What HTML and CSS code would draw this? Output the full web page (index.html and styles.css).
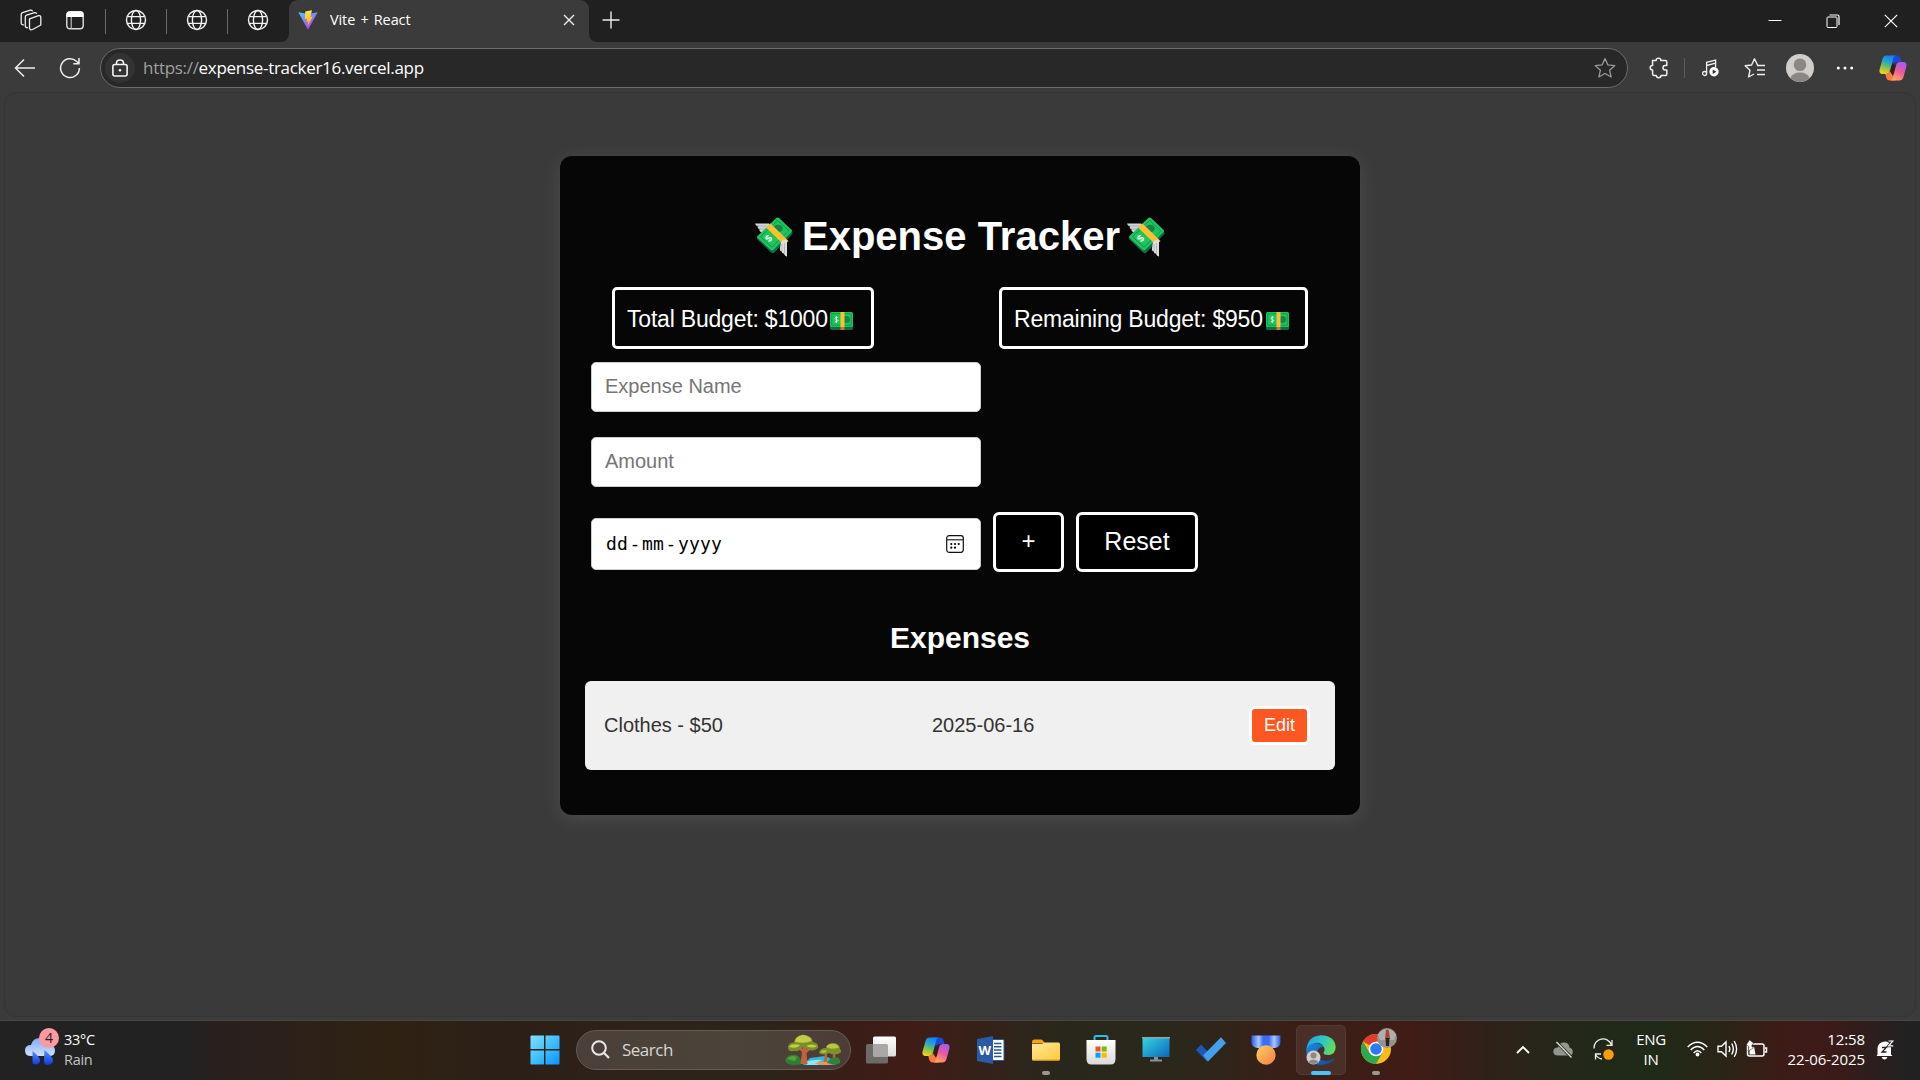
FILE: index.html
```html
<!DOCTYPE html>
<html lang="en">
<head>
<meta charset="utf-8">
<title>Vite + React</title>
<link rel="stylesheet" href="styles.css">
</head>
<body>
<svg class="defs" aria-hidden="true">
  <defs>
    <linearGradient id="vA" x1="0" y1="0" x2="0.6" y2="1"><stop offset="0" stop-color="#41d1ff"/><stop offset="1" stop-color="#bd34fe"/></linearGradient>
    <linearGradient id="vB" x1="0" y1="0" x2="0" y2="1"><stop offset="0" stop-color="#ffea83"/><stop offset=".2" stop-color="#ffdd35"/><stop offset="1" stop-color="#ffa800"/></linearGradient>
    <linearGradient id="cpA" x1="0.6" y1="0" x2="0.3" y2="1"><stop offset="0" stop-color="#1a7fe8"/><stop offset=".3" stop-color="#1f9fdc"/><stop offset=".6" stop-color="#6fc05a"/><stop offset="1" stop-color="#f8d21c"/></linearGradient>
    <linearGradient id="cpB" x1="0.7" y1="0" x2="0.3" y2="1"><stop offset="0" stop-color="#a45af0"/><stop offset=".5" stop-color="#ee5a9c"/><stop offset="1" stop-color="#ffa85a"/></linearGradient>
    <linearGradient id="win" x1="0" y1="0" x2="1" y2="1"><stop offset="0" stop-color="#84e0ff"/><stop offset=".5" stop-color="#3fc0ff"/><stop offset="1" stop-color="#0a93ff"/></linearGradient>
    <linearGradient id="cloud" x1="0" y1="0" x2="0" y2="1"><stop offset="0" stop-color="#7ea9f8"/><stop offset="1" stop-color="#d3e0fb"/></linearGradient>
    <linearGradient id="drop" x1="0" y1="0" x2="0" y2="1"><stop offset="0" stop-color="#4f97ff"/><stop offset="1" stop-color="#1238e0"/></linearGradient>
    <linearGradient id="fold" x1="0" y1="0" x2="1" y2="1"><stop offset="0" stop-color="#ffe89a"/><stop offset="1" stop-color="#ffc93a"/></linearGradient>
    <linearGradient id="scr" x1="0" y1="0" x2="1" y2="1"><stop offset="0" stop-color="#35d6e0"/><stop offset="1" stop-color="#0b66bd"/></linearGradient>
    <linearGradient id="bag" x1="0" y1="0" x2="0" y2="1"><stop offset="0" stop-color="#fff"/><stop offset="1" stop-color="#d9d9d9"/></linearGradient>
    <linearGradient id="medal" x1="0" y1="0" x2="1" y2="1"><stop offset="0" stop-color="#ffd35a"/><stop offset="1" stop-color="#f47c48"/></linearGradient>
    <linearGradient id="rib" x1="0" y1="0" x2="1" y2="0"><stop offset="0" stop-color="#2f5bf0"/><stop offset=".25" stop-color="#a9c9ff"/><stop offset=".4" stop-color="#3d6cf6"/><stop offset=".6" stop-color="#3d6cf6"/><stop offset=".78" stop-color="#a9c9ff"/><stop offset="1" stop-color="#2f5bf0"/></linearGradient>
    <linearGradient id="edA" x1="0" y1="0.3" x2="1" y2="0.6"><stop offset="0" stop-color="#1fa3e4"/><stop offset=".5" stop-color="#2fc6c9"/><stop offset="1" stop-color="#66e04e"/></linearGradient>
    <linearGradient id="edB" x1="0" y1="0" x2="1" y2="1"><stop offset="0" stop-color="#1b8be0"/><stop offset="1" stop-color="#0d4a9e"/></linearGradient>
    <linearGradient id="tv" x1="0" y1="0" x2="0" y2="1"><stop offset="0" stop-color="#fff"/><stop offset="1" stop-color="#dcdcdc"/></linearGradient>
    <symbol id="globe" viewBox="0 0 22 22"><g fill="none" stroke="#f2f2f2" stroke-width="1.4"><circle cx="11" cy="11" r="9.5"/><ellipse cx="11" cy="11" rx="4.6" ry="9.5"/><path d="M2.4 7.6H19.6M2.4 14.4H19.6"/></g></symbol>
    <symbol id="copilot" viewBox="0 0 28 26">
      <path d="M10 .5H18C20 .5 21 1.500 21.600 3.500L22.500 7H18C15.500 7 14.500 8.500 13.800 11L12 3Z" fill="#1b48d8"/>
      <path d="M8 .5H17C15 1 14.500 2.500 14 4.500L10.800 16C10.100 18.300 9 19 7 19H4C1 19 0 17 .6 14.500L3.500 4C4.300 1.500 5.500 .5 8 .5Z" fill="url(#cpA)"/>
      <path d="M7 19C9 19 10.100 18.300 10.800 16L12 12L16.500 25.500H11C8.800 25.500 7.800 24.500 7.200 22.500L6.300 19Z" fill="#ff7a3c"/>
      <path d="M10.800 16L13.800 8L17 10.500L14 21Z" fill="#2c241f"/>
      <path d="M20 25.500H11.500C13.200 25 13.700 23.500 14.200 21.500L17.200 10C17.900 7.700 19 7 21 7H24C27 7 28 9 27.400 11.500L24.500 22C23.700 24.500 22.500 25.500 20 25.500Z" fill="url(#cpB)"/>
    </symbol>
    <symbol id="wings" viewBox="0 0 38 40">
      <path d="M0 6.500H14L18 11L8 16C5 15 3.500 13 5 12.500C2.500 11.500 2 10 3.500 9.500C1.500 9 .5 8 0 6.500Z" fill="#d5d5d8"/>
      <path d="M2 9H12M4 12H11" stroke="#a6a6ac" stroke-width=".8"/>
      <path d="M3 20L22 1.500Q23 .6 24 1.600L37 14.500Q38.300 16.500 37 17.500L19.500 35.500Q17.500 37 15.500 35L2.500 22.500Q1.500 21.200 3 20Z" fill="#0d6b45"/>
      <path d="M2.500 19L21.500 .8Q22.800 0 24 1L36.500 12.800Q37.500 14 36.500 15L18.500 32.800Q17 34 15.500 32.700L2.500 21Q1.500 20 2.500 19Z" fill="#20c45e"/>
      <path d="M5.500 19.800L22.700 3.400L33.800 13.800L16.900 30.200Z" fill="none" stroke="#12974c" stroke-width="1"/>
      <ellipse cx="23" cy="11.500" rx="4.800" ry="3.800" fill="#11874a"/>
      <path d="M11 10.500L15.500 6.500L33.500 24L29 28Z" fill="#fdc02f"/>
      <text class="bill-sign" transform="translate(13.500 21) rotate(-48)" x="-3" y="3.600">$</text>
      <path d="M26 25Q30 21 32 23.500V39.500Q29.500 39 29 36.500Q27 37 26.800 34.500Q25 34.500 24.800 32Z" fill="#dedde0"/>
      <path d="M27 27V34M29.500 26V36" stroke="#a9a9ae" stroke-width=".8"/>
    </symbol>
    <symbol id="cash" viewBox="0 0 24 18">
      <rect x="0" y="1" width="23" height="17" rx="1.500" fill="#0d6b45"/>
      <rect x="0" y="0" width="23" height="15" rx="1.500" fill="#20c45e"/>
      <rect x="1.800" y="1.800" width="19.400" height="11.400" fill="none" stroke="#12974c" stroke-width=".9"/>
      <circle cx="16.500" cy="7.500" r="3.500" fill="#0f8a49"/>
      <rect x="10.500" width="4" height="15" fill="#fdc02f"/><rect x="10.500" y="15" width="4" height="3" fill="#c87b22"/>
      <path d="M7.800 5.600Q5 4.600 5.200 6.300T7.500 8.200T5 9.700M6.400 4V11" fill="none" stroke="#d9ffe6" stroke-width=".9"/>
    </symbol>
  </defs>
</svg>

<header class="tabstrip">
  <div class="strip-left">
    <svg class="i-work" width="22" height="22" viewBox="0 0 22 22"><g fill="none" stroke="#eee" stroke-width="1.300" stroke-linejoin="round"><path d="M9.500 9.800L18.500 6.700Q20.600 6.300 20.800 8.300V16L12.500 20.500Q10 21.500 9.500 19Z"/><path d="M8 18.500Q5.500 19 5.300 17V8Q5.400 6.700 6.500 6.200L14.500 3.600Q16.300 3.300 16.700 4.800"/><path d="M4 15.800Q1.300 16 1.200 14V5.500Q1.200 4.200 2.500 3.600L10.500 1.100Q12.200 .8 12.600 2.300"/></g></svg>
    <svg class="i-acts" width="18" height="19" viewBox="0 0 18 19"><rect x=".8" y=".8" width="16.400" height="17" rx="3" fill="none" stroke="#ddd" stroke-width="1.400"/><path d="M.5 6V3.500Q.5.500 3.500.500H14.500Q17.500.500 17.500 3.500V6Z" fill="#fff"/><path d="M5.200 6V18" stroke="#bbb" stroke-width="1.200"/></svg>
    <i class="sep"></i><svg class="globe"><use href="#globe"/></svg>
    <i class="sep"></i><svg class="globe"><use href="#globe"/></svg>
    <i class="sep"></i><svg class="globe"><use href="#globe"/></svg>
  </div>
  <div class="tab-wrap"><div class="tab">
    <svg width="20" height="20" viewBox="0 0 20 20"><path d="M.3 2.200L10 19.800L19.700 2.200L10.500 3.900Z" fill="url(#vA)"/><path d="M14 .2L7.300 1.500L6.800 9.300L9 8.800L8.300 12L10.200 11.400L9.600 16.500L14.700 6.500L12.300 7Z" fill="url(#vB)"/></svg>
    <span class="tab-title">Vite + React</span>
    <svg class="tab-x" width="12" height="12" viewBox="0 0 12 12"><path d="M1 1L11 11M11 1L1 11" stroke="#eee" stroke-width="1.400"/></svg>
  </div></div>
  <div class="strip-right">
    <svg width="18" height="18" viewBox="0 0 18 18"><path d="M9 .5V17.500M.5 9H17.500" stroke="#eee" stroke-width="1.400"/></svg>
    <div class="winctl">
      <svg width="14" height="14" viewBox="0 0 14 14"><path d="M.5 6.500H13.500" stroke="#fff"/></svg>
      <svg width="14" height="14" viewBox="0 0 14 14"><g fill="none" stroke="#fff"><rect x="1" y="3" width="10" height="10.500" rx="1"/><path d="M3.500 1H11.500Q13 1 13 2.500V11" stroke-width="1.200"/></g></svg>
      <svg width="14" height="14" viewBox="0 0 14 14"><path d="M.8 .8L13.200 13.200M13.200 .8L.8 13.200" stroke="#fff" stroke-width="1.200"/></svg>
    </div>
  </div>
</header>

<nav class="toolbar">
  <svg class="i-back" width="22" height="20" viewBox="0 0 22 20"><path d="M21 10H1.500M10 1.500L1.500 10L10 18.500" fill="none" stroke="#eee" stroke-width="1.500"/></svg>
  <svg class="i-reload" width="22" height="22" viewBox="0 0 22 22"><path d="M20.400 11A9.400 9.400 0 1 1 17.500 4.300L20 6.500M20 1V6.800H14.300" fill="none" stroke="#eee" stroke-width="1.500"/></svg>
  <div class="address">
    <span class="lock"><svg width="16" height="18" viewBox="0 0 16 18"><g fill="none" stroke="#f4f4f4" stroke-width="1.600"><rect x=".9" y="5.500" width="14.200" height="11.500" rx="2"/><path d="M4.500 5.500V4.200Q4.500 1 8 1T11.500 4.200V5.500"/></g><circle cx="8" cy="11.300" r="1.300" fill="#fff"/></svg></span>
    <span class="url"><span class="scheme">https://</span>expense-tracker16.vercel.app</span>
    <svg class="i-star" width="22" height="22" viewBox="0 0 22 22"><path d="M11 1.500L13.900 7.900L20.800 8.600L15.600 13.200L17.100 20L11 16.500L4.900 20L6.400 13.200L1.200 8.600L8.100 7.900Z" fill="none" stroke="#999" stroke-width="1.300" stroke-linejoin="round"/></svg>
  </div>
  <svg class="i-puzzle" width="20" height="22" viewBox="0 0 20 22"><path d="M3.500 3.500H7.200Q7 1.200 9.500 1.200T11.800 3.500H16.500Q17.800 3.500 17.800 5V8.600H16Q14 8.700 14 10.800T16 13H17.800V17Q17.800 18.500 16.500 18.500H12Q12 20.700 9.700 20.700T7.300 18.500H5Q3.700 18.500 3.600 17V13Q1.200 13 1.200 10.800T3.600 8.600Z" fill="none" stroke="#eee" stroke-width="1.500" stroke-linejoin="round"/></svg>
  <i class="tsep"></i>
  <svg class="i-music" width="17" height="18" viewBox="0 0 17 18"><g fill="none" stroke="#eee" stroke-width="1.300"><circle cx="2.600" cy="14.500" r="2"/><path d="M4.600 14.500V3.300L13.600 1V8M4.600 6.500L13.600 4.200"/></g><circle cx="12" cy="12.700" r="4.700" fill="#fff"/><path d="M10.700 10.500L14.300 12.700L10.700 14.900Z" fill="#333"/></svg>
  <svg class="i-fav" width="22" height="22" viewBox="0 0 22 22"><path d="M13.500 8L10.500 1.800L7.600 8L1.200 8.700L6 13.200L4.600 20L10 17M13 8.500H21M13 13H21M13 17.500H21" fill="none" stroke="#eee" stroke-width="1.400" stroke-linejoin="round"/></svg>
  <svg class="i-user" width="28" height="28" viewBox="0 0 28 28"><circle cx="14" cy="14" r="14" fill="#d0cdca"/><circle cx="14" cy="10.700" r="6.300" fill="#8b8784"/><path d="M4.300 24Q7 18.500 14 18.500T23.700 24A14 14 0 0 1 4.300 24Z" fill="#8b8784"/></svg>
  <svg class="i-dots" width="18" height="4" viewBox="0 0 18 4"><g fill="#fff"><circle cx="2.300" cy="2" r="1.500"/><circle cx="9" cy="2" r="1.500"/><circle cx="15.700" cy="2" r="1.500"/></g></svg>
  <svg class="i-cop"><use href="#copilot"/></svg>
</nav>

<main class="viewport">
  <section class="card">
    <h1><svg class="wings"><use href="#wings"/></svg><span>Expense Tracker</span><svg class="wings"><use href="#wings"/></svg></h1>
    <div class="budgets">
      <div class="budget total">Total Budget: $1000<svg class="cash"><use href="#cash"/></svg></div>
      <div class="budget remaining">Remaining Budget: $950<svg class="cash"><use href="#cash"/></svg></div>
    </div>
    <div class="form">
      <input class="field" type="text" placeholder="Expense Name">
      <input class="field" type="text" placeholder="Amount">
      <div class="form-row">
        <div class="date"><span class="parts"><span>dd</span><span class="dash">-</span><span>mm</span><span class="dash">-</span><span>yyyy</span></span>
          <svg width="18" height="18" viewBox="0 0 18 18"><rect x=".7" y=".7" width="16.600" height="16.600" rx="2.500" fill="none" stroke="#111" stroke-width="1.200"/><path d="M1 4.800H17" stroke="#111" stroke-width="1.100"/><g fill="#000"><circle cx="5.300" cy="9" r="1.100"/><circle cx="9" cy="9" r="1.100"/><circle cx="12.700" cy="9" r="1.100"/><circle cx="5.300" cy="12.700" r="1.100"/><circle cx="9" cy="12.700" r="1.100"/></g></svg>
        </div>
        <button class="btn add">+</button>
        <button class="btn reset">Reset</button>
      </div>
    </div>
    <h2>Expenses</h2>
    <div class="expense"><span class="what">Clothes - $50</span><span class="when">2025-06-16</span><button class="edit">Edit</button></div>
  </section>
</main>

<footer class="taskbar">
  <div class="weather">
    <div class="wicon"><svg width="32" height="28" viewBox="0 0 32 28"><path d="M7 19Q1 19 1 13.500T7 8Q9 1 15.500 1T24 7Q31 8 31 13.500T25 19Z" fill="url(#cloud)"/><path d="M8.500 14Q16 20 16 23.500T12 27.500T8.500 23Z" fill="url(#drop)"/><path d="M20.500 13Q29 20 29 23.500T24.500 27.800T20 23.500Z" fill="url(#drop)"/></svg><b>4</b></div>
    <div class="wtext"><span>33°C</span><span class="dim">Rain</span></div>
  </div>
  <div class="apps">
    <div class="app start"><svg width="30" height="30" viewBox="0 0 30 30"><path d="M1.500 .5H14V14H.5V1.500Q.5 .5 1.500 .5ZM15.500 .5H28.500Q29.500 .5 29.500 1.500V14H15.500ZM.5 15.500H14V29.500H1.500Q.5 29.500 .5 28.500ZM15.500 15.500H29.500V28.500Q29.500 29.500 28.500 29.500H15.500Z" fill="url(#win)"/></svg></div>
    <div class="search">
      <svg width="19" height="19" viewBox="0 0 19 19"><circle cx="8" cy="8" r="6.800" fill="none" stroke="#e8e8e8" stroke-width="2"/><path d="M12.800 12.800L18 18" stroke="#e8e8e8" stroke-width="2.200"/></svg>
      <span>Search</span>
      <svg class="trees" width="56" height="32" viewBox="0 0 56 32"><path d="M18 31L25 24L40 22L53 28L50 31Z" fill="#35b6d9"/><path d="M20 28Q30 25 38 26Q30 28 36 31H22Z" fill="#8fe6f2"/><path d="M30 29Q40 26 48 30L44 31H34Z" fill="#e29a62"/><path d="M0 27Q1 22 6 21Q12 19 15 24L18 30Q8 32 3 30Z" fill="#2f7d32"/><path d="M2 25Q6 20 12 23L10 27Z" fill="#56a33a"/><path d="M15.500 30L17 18L10 12L13 11L18 15L19 8L21.500 15L27 11L28.500 13L21.500 19L22.500 30Z" fill="#c2603f"/><path d="M3 15Q2 9 9 8.500Q9 3 18 .5Q28 2 28 8Q34 9 33 14Q29 18 23 15.500Q20 13 18 13Q14 18 9 17Q4 18 3 15Z" fill="#7a8f2a"/><path d="M10 8Q10 2 18 1Q26 2 26.500 7Q20 10 10 8ZM4 13Q6 9 15 11Q12 15 4 13ZM21 12Q27 9 32 12Q28 15 21 12Z" fill="#c2cc49"/><path d="M38.500 28L40 19L42 19V28ZM47.500 27L48 18H50.500L50 27Z" fill="#c2603f"/><path d="M34 19Q35 14 41 14Q42 9 49 9Q55 10 55 15Q58 18 53 20Q46 21 44 19Q38 22 34 19Z" fill="#7d9329"/><path d="M41 13Q44 9 50 10Q55 12 53 14Q46 16 41 13ZM35 18Q38 15 42 17Q40 20 35 18Z" fill="#b9c545"/><path d="M42 29Q45 23 50 23Q56 23 55 29L50 31Z" fill="#388039"/></svg>
    </div>
    <div class="app"><svg width="30" height="28" viewBox="0 0 30 28"><rect y="8" width="22" height="19.500" rx="1.500" fill="#6e6a69"/><rect x="7" y=".5" width="23" height="20" rx="1.500" fill="url(#tv)"/><path d="M7 8H20.500Q22 8 22 9.500V20.500H8.500Q7 20.500 7 19Z" fill="#aaa7a6"/></svg></div>
    <div class="app"><svg class="cop"><use href="#copilot"/></svg></div>
    <div class="app"><svg width="28" height="28" viewBox="0 0 28 28"><rect x="13" y="3.500" width="14" height="21" rx="1" fill="#fff" stroke="#2b5797"/><path d="M17 7.500H24.500M17 10.700H24.500M17 14H24.500M17 17.200H24.500M17 20.500H24.500" stroke="#2b5797" stroke-width="1.500"/><path d="M0 3L16 0V28L0 25Z" fill="#2b5aa5"/><text x="1.500" y="19" class="wordw">W</text></svg></div>
    <div class="app open"><svg width="28" height="22" viewBox="0 0 28 22"><path d="M0 3Q0 .5 2 .5H9Q10.500 .5 11.500 2.500L13 4.500H0Z" fill="#f5a50e"/><path d="M0 5H10L12 3.500H26.500Q28 3.500 28 5V20Q28 21.500 26.500 21.500H1.500Q0 21.500 0 20Z" fill="url(#fold)"/><path d="M.5 21H27.500" stroke="#e0a316"/></svg></div>
    <div class="app"><svg width="30" height="30" viewBox="0 0 30 30"><path d="M8.500 6V2.500Q8.500 1 10 1H20Q21.500 1 21.500 2.500V6" fill="none" stroke="#2bbce8" stroke-width="2"/><path d="M.5 5H29.500V24Q29.500 29.500 24.500 29.500H5.500Q.5 29.500 .5 24Z" fill="url(#bag)"/><path d="M9.500 11.500H14.500V16.500H9.500Z" fill="#f25022"/><path d="M15.700 11.500H20.700V16.500H15.700Z" fill="#7fba00"/><path d="M9.500 17.700H14.500V22.700H9.500Z" fill="#00a4ef"/><path d="M15.700 17.700H20.700V22.700H15.700Z" fill="#ffb900"/></svg></div>
    <div class="app"><svg width="28" height="25" viewBox="0 0 28 25"><rect x=".5" y=".5" width="27" height="19.500" fill="url(#scr)"/><path d="M0 .7H28" stroke="#8fa6ad" stroke-width="1.500"/><path d="M12 20H16V22.500H20V24.500H8V22.500H12Z" fill="#8a8f95"/></svg></div>
    <div class="app"><svg width="30" height="25" viewBox="0 0 30 25"><path d="M0 13L5 7.500L15 18L11 24.500Z" fill="#1b58bd"/><path d="M25 .3L30 6L12 24.500L7 18.500Z" fill="#43a0ee"/></svg></div>
    <div class="app"><svg width="30" height="30" viewBox="0 0 30 30"><path d="M.5 .5H29.500V7Q29.500 12 24 13H6Q.5 12 .5 7Z" fill="url(#rib)"/><circle cx="15" cy="20" r="9.700" fill="url(#medal)"/></svg></div>
    <div class="app active"><svg width="30" height="30" viewBox="0 0 30 30"><path d="M.3 16Q1 1 15 .2Q29 1 29.700 12Q29.500 19 23 20Q17 20 17.500 17.500Q19 16 18.500 13.500Q16 7 9 8Q2 10 .3 16Z" fill="url(#edA)"/><path d="M.3 16Q2 8.500 10 8Q16 8.500 17 12Q11 12 11 19Q12 26 20 26Q25 26 27.500 23Q29 22.500 28 24.500Q23 30 15 29.900Q1 29 .3 16Z" fill="url(#edB)"/><circle cx="7.500" cy="22.500" r="7" fill="#d0cdca"/><circle cx="7.500" cy="20.500" r="3" fill="#8b8784"/><path d="M2.500 27Q4 24.500 7.500 24.500T12.500 27A7 7 0 0 1 2.500 27Z" fill="#8b8784"/></svg></div>
    <div class="app open"><svg class="chrome" width="38" height="38" viewBox="0 0 38 38"><circle cx="16" cy="22" r="15" fill="#fbbc16"/><path d="M16 22L3 14.500A15 15 0 0 1 29 14.500H16Z" fill="#e33b2e"/><path d="M3 14.500A15 15 0 0 0 16 37L22.500 25.700L9.500 25.700Z" fill="#2da94f"/><circle cx="16" cy="22" r="7.300" fill="#fff"/><circle cx="16" cy="22" r="5.800" fill="#2a7af3"/><circle cx="27" cy="11" r="10" fill="#96938a"/><path d="M18 8A10 10 0 0 1 36 8L34 13H20Z" fill="#aeb0ab"/><path d="M26 3Q28 1.500 29 4L30 12H25Z" fill="#a9443b"/><path d="M25.500 11H29.500L29 19H26Z" fill="#272322"/></svg></div>
  </div>
  <div class="tray">
    <svg class="t-chev" width="14" height="9" viewBox="0 0 14 9"><path d="M1 8L7 2L13 8" fill="none" stroke="#fff" stroke-width="1.900"/></svg>
    <svg class="t-cloud" width="20" height="17" viewBox="0 0 20 17"><path d="M5 14.500Q.3 14.500.3 10.500T5 6.500Q6 1.500 11 1.500T16.500 6.500Q20 7.500 19.800 11T16 14.500Z" fill="#92968e"/><path d="M3 .5L18 16" stroke="#26301d" stroke-width="3"/><path d="M3.500 1L18.500 16.500" stroke="#ddd" stroke-width="1.300"/></svg>
    <svg class="t-sync" width="21" height="21" viewBox="0 0 21 21"><path d="M1 9.500A9 9 0 0 1 18.500 6M19 1V6.300H13.500M2.500 20.500V15H8M2.500 15.500Q5 19.500 9 20" fill="none" stroke="#eee" stroke-width="1.300"/><circle cx="15.500" cy="15.500" r="5.200" fill="#ff9d0a"/></svg>
    <div class="lang"><span>ENG</span><span>IN</span></div>
    <svg class="t-wifi" width="21" height="16" viewBox="0 0 21 16"><g fill="none" stroke="#fff" stroke-width="1.500"><path d="M.7 6Q10.500-3.500 20.300 6M3.700 9Q10.500 2 17.300 9M6.700 12Q10.500 7.500 14.300 12"/></g><circle cx="10.500" cy="13.500" r="1.900" fill="#fff"/></svg>
    <svg class="t-vol" width="21" height="18" viewBox="0 0 21 18"><g fill="none" stroke="#fff" stroke-width="1.400"><path d="M1 6.300H4.500L9 2V16L4.500 11.700H1Z"/><path d="M12 6Q13.700 9 12 12M14.700 3.500Q18 9 14.700 14.500M17.200 1Q22 9 17.200 17"/></g></svg>
    <svg class="t-bat" width="22" height="18" viewBox="0 0 22 18"><rect x="1.500" y="4" width="16.500" height="12" rx="2" fill="none" stroke="#fff" stroke-width="1.500"/><path d="M19 8H20.500V12H19" fill="none" stroke="#fff" stroke-width="1.500"/><path d="M3.500 14.500V10L8 6.500L9.500 14.500Z" fill="#fff"/><path d="M3.500 0L7.500 3L5.500 6L7.500 8L2 11L3 7L.5 4.500Z" fill="#fff" stroke="#2e2217" stroke-width=".5"/></svg>
    <div class="clock"><span>12:58</span><span>22-06-2025</span></div>
    <svg class="t-bell" width="18" height="20" viewBox="0 0 18 20"><path d="M1.500 14.500V8.500Q2 2 9 1.500Q14 1.500 15 7V14.500L16.500 16H.5Z" fill="#fff"/><path d="M5.500 17H11.500Q10.500 19.500 8.500 19.500T5.500 17Z" fill="#fff"/><path d="M6 7.500H10.300L6 12H10.500" fill="none" stroke="#222" stroke-width="1.300"/><path d="M12 .8H17L12.500 6H17.500" fill="none" stroke="#222" stroke-width="2.600"/><path d="M12.500 1H16.800L12.700 5.800H17.300" fill="none" stroke="#fff" stroke-width="1.200"/></svg>
  </div>
</footer>
</body>
</html>
```
FILE: styles.css
```css
* { box-sizing: border-box; }
body {
  margin: 0;
  width: 1920px;
  height: 1080px;
  overflow: hidden;
  display: flex;
  flex-direction: column;
  background: #3b3b3b;
  color: #fff;
  font-family: "Open Sans", "Noto Sans", sans-serif;
}
svg { display: block; flex: none; overflow: visible; }
.defs { position: absolute; width: 0; height: 0; }

/* Tab strip */
.tabstrip { display: flex; height: 42px; flex: none; }
.strip-left {
  width: 289px;
  padding: 0 0 2px 20px;
  display: flex;
  align-items: center;
  background: #202020;
  border-bottom-right-radius: 8px;
}
.i-acts { margin-left: 24px; margin-right: 21px; }
.sep { width: 1px; height: 25px; margin-top: 3px; background: #6a6a6a; }
.globe { width: 22px; height: 22px; margin: 0 19px; }
.globe:last-child { margin-right: 0; }
.tab-wrap { width: 300px; background: #202020; }
.tab {
  height: 42px;
  padding: 0 14px 2px 9px;
  display: flex;
  align-items: center;
  background: #3b3b3b;
  border-radius: 9px 9px 0 0;
}
.tab-title { margin: -2px 0 0 12px; font-size: 14.500px; letter-spacing: -0.100px; word-spacing: 1.500px; white-space: nowrap; }
.tab-x { margin-left: auto; }
.strip-right {
  flex: 1;
  padding: 0 22px 2px 13px;
  display: flex;
  align-items: center;
  justify-content: space-between;
  background: #202020;
  border-bottom-left-radius: 8px;
}
.winctl { display: flex; gap: 44px; padding-top: 2px; }

/* Toolbar */
.toolbar { display: flex; align-items: center; height: 50px; flex: none; padding: 1px 13px 0 14px; }
.i-reload { margin-left: 23px; margin-right: 19px; }
.address {
  width: 1528px;
  flex: none;
  height: 40px;
  padding: 0 11px 0 4px;
  display: flex;
  align-items: center;
  background: #282828;
  border: 1px solid #6c6c6c;
  border-radius: 20px;
}
.lock { width: 30px; height: 30px; display: grid; place-items: center; background: #333; border-radius: 50%; }
.url { margin-left: 8px; font-size: 17px; letter-spacing: -0.300px; white-space: nowrap; }
.scheme { color: #a0a0a0; }
.i-star { margin-left: auto; }
.i-puzzle { margin-left: 21px; }
.tsep { width: 1px; height: 20px; margin: 0 17px 0 15px; background: #5c5c5c; }
.i-fav { margin-left: auto; }
.i-user { margin-left: 20px; }
.i-dots { margin-left: 22px; }
.i-cop { width: 28px; height: 26px; margin-left: 25px; }

/* Page area */
.viewport {
  height: 925px;
  margin: 0 4px;
  padding-top: 63px;
  flex: none;
  background: #3a3a3a;
  border: 1px solid #353535;
  border-radius: 12px;
  font-family: "Liberation Sans", Arial, sans-serif;
}
.card {
  width: 800px;
  height: 659px;
  margin: 0 auto;
  padding: 55px 25px 0;
  background: #060606;
  border-radius: 12px;
  box-shadow: 0 4px 20px rgba(255, 255, 255, 0.1);
}
h1 {
  height: 50px;
  margin: 0;
  display: flex;
  justify-content: center;
  font-size: 40px;
  line-height: 50px;
}
h1 span { margin: 0 7px 0 9px; }
.wings { width: 38px; height: 40px; margin-top: 6px; }
.bill-sign { fill: #e8fff0; font: 700 10px "Liberation Sans", Arial, sans-serif; }
.budgets { display: flex; justify-content: space-between; margin-top: 26px; padding: 0 27px; }
.budget {
  display: flex;
  align-items: center;
  justify-content: space-between;
  height: 62px;
  padding: 2px 17px 0 12px;
  border: 3px solid #fff;
  border-radius: 5px;
  font-size: 23px;
  letter-spacing: -0.200px;
  white-space: nowrap;
}
.total { width: 262px; }
.remaining { width: 309px; padding-right: 15px; }
.cash { width: 24px; height: 18px; margin-top: 4px; }
.form { margin: 13px 6px 0; display: flex; flex-direction: column; gap: 25px; }
.field {
  width: 390px;
  height: 50px;
  padding: 0 13px 2px;
  border: 1px solid #ccc;
  border-radius: 5px;
  background: #fff;
  font: 20px "Liberation Sans", Arial, sans-serif;
}
.field::placeholder { color: #757575; }
.form-row { display: flex; align-items: center; gap: 12px; height: 60px; }
.date {
  width: 390px;
  height: 52px;
  margin-top: 4px;
  padding: 0 16px 0 14px;
  display: flex;
  align-items: center;
  justify-content: space-between;
  background: #fff;
  border: 1px solid #ccc;
  border-radius: 5px;
  color: #000;
  font: 18px "DejaVu Sans Mono", monospace;
  letter-spacing: 0.160px;
}
.parts { display: flex; margin-top: -2px; }
.dash { margin: 0 1.500px; }
.btn {
  height: 60px;
  padding: 0 0 2px;
  background: #000;
  border: 3px solid #fff;
  border-radius: 6px;
  color: #fff;
  font: 24px "Liberation Sans", Arial, sans-serif;
}
.add { width: 71px; }
.reset { width: 122px; font-size: 25px; }
h2 { margin: 46px 0 0; height: 40px; font-size: 30px; line-height: 40px; text-align: center; }
.expense {
  height: 89px;
  margin-top: 23px;
  padding: 0 25px 0 19px;
  display: flex;
  align-items: center;
  background: #f0f0f0;
  border-radius: 6px;
  color: #333;
  font-size: 20px;
}
.what { width: 328px; }
.edit {
  width: 61px;
  height: 39px;
  margin-left: auto;
  padding: 0;
  background: #ff5722;
  border: 3px solid #fff;
  border-radius: 6px;
  color: #fff;
  font: 18px "Liberation Sans", Arial, sans-serif;
}

/* Taskbar */
.taskbar {
  height: 60px;
  margin-top: auto;
  padding-bottom: 2px;
  flex: none;
  display: flex;
  align-items: center;
  border-top: 1px solid #4a4743;
  background: linear-gradient(90deg, #222 0, #222 180px, #2b201c 250px, #2f2213 390px, #2c1f18 510px, #2e221a 640px, #2b2519 760px, #3b1d17 860px, #401c17 910px, #32231a 1000px, #29271c 1060px, #2b271b 1190px, #3a1f17 1290px, #401c17 1410px, #2f2118 1490px, #24271a 1560px, #1f2a18 1650px, #2a2416 1725px, #3c1b17 1780px, #3c1a18 1830px, #2a1f1f 1880px, #212121 1905px);
}
.weather { width: 517px; display: flex; padding-left: 24px; }
.wicon { position: relative; width: 32px; padding-top: 7px; }
.wicon b {
  position: absolute;
  left: 15px;
  top: -2px;
  width: 20px;
  height: 20px;
  border-radius: 50%;
  background: #ff9aa2;
  color: #222;
  font-size: 14px;
  font-weight: 400;
  line-height: 20px;
  text-align: center;
}
.wtext, .lang, .clock {
  display: flex;
  flex-direction: column;
  font-size: 14.500px;
  line-height: 20px;
  letter-spacing: -0.300px;
  white-space: nowrap;
}
.wtext { margin-left: 8px; }
.dim { color: #c4c4c4; }
.apps { display: flex; align-items: center; }
.app { position: relative; width: 55px; height: 50px; display: grid; place-items: center; }
.start { margin-right: 4px; }
.search {
  width: 275px;
  height: 40px;
  margin-right: 2px;
  padding: 0 9px 0 14px;
  display: flex;
  align-items: center;
  background: linear-gradient(90deg, #4b4039, #4a443a 60%, #4e3b36);
  border: 1px solid #665b53;
  border-radius: 20px;
  color: #d8d5d2;
  font-size: 17px;
  letter-spacing: -0.500px;
}
.search span { margin-left: 12px; }
.trees { margin-left: auto; }
.cop { width: 28px; height: 26px; }
.wordw { fill: #fff; font: 700 13px "Open Sans", sans-serif; }
.open::after, .active::after {
  content: "";
  position: absolute;
  left: 50%;
  bottom: 0;
  width: 8px;
  height: 4px;
  margin-left: -4px;
  border-radius: 2px;
  background: #9c9690;
}
.active { width: 50px; margin: 0 2.500px; background: #4a2e28; border: 1px solid #553a34; border-radius: 5px; }
.active::after { width: 20px; margin-left: -10px; bottom: -1px; background: #4cc2ff; }
.chrome { margin: -8px -7px 0 0; }
.tray { flex: 1; display: flex; align-items: center; }
.t-chev { margin-left: 113px; }
.t-cloud { margin-left: 23px; }
.t-sync { margin-left: 20px; }
.lang { margin: -1px 0 0 18px; width: 38px; text-align: center; font-size: 15px; }
.t-wifi { margin-left: 17px; margin-top: -1px; }
.t-vol { margin-left: 9px; margin-top: -1px; }
.t-bat { margin-left: 8px; margin-top: -1px; }
.clock { margin: -2px 0 0 auto; text-align: right; font-size: 15px; letter-spacing: -0.080px; }
.t-bell { margin-left: 11px; margin-right: 26px; }
```
